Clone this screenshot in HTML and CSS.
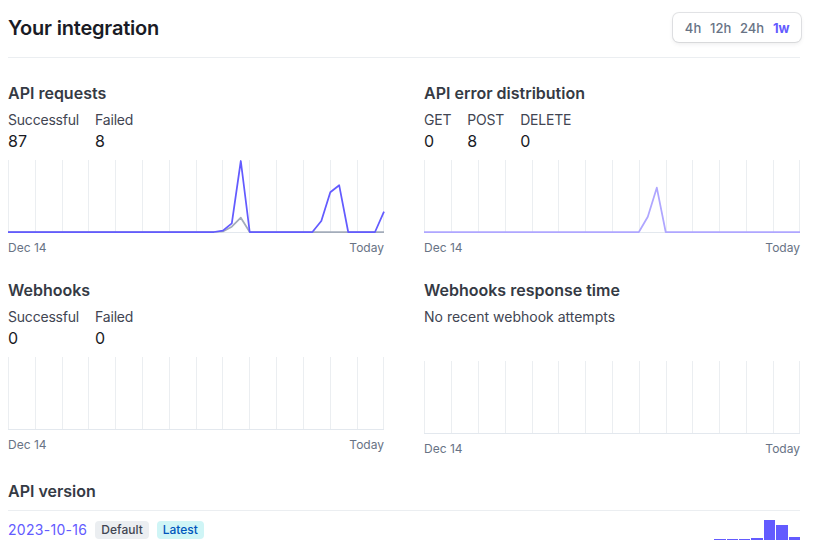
FILE: index.html
```html
<!DOCTYPE html>
<html>
<head>
<meta charset="utf-8">
<link rel="stylesheet" href="styles.css">
</head>
<body>
<div class="page">
  <header class="header">
    <h1 class="title">Your integration</h1>
    <div class="range">
      <span class="range-item">4h</span>
      <span class="range-item">12h</span>
      <span class="range-item">24h</span>
      <span class="range-item active">1w</span>
    </div>
  </header>
  <div class="divider"></div>

  <div class="grid">
    <section class="card">
      <h2 class="card-title">API requests</h2>
      <div class="stats">
        <div class="stat"><div class="stat-label">Successful</div><div class="stat-value">87</div></div>
        <div class="stat"><div class="stat-label">Failed</div><div class="stat-value">8</div></div>
      </div>
      <svg class="chart" width="376" height="73" viewBox="0 0 376 73">
        <g class="grid-lines">
          <line x1="0.5" y1="0" x2="0.5" y2="73"/><line x1="27.5" y1="0" x2="27.5" y2="73"/><line x1="54.5" y1="0" x2="54.5" y2="73"/><line x1="80.5" y1="0" x2="80.5" y2="73"/><line x1="107.5" y1="0" x2="107.5" y2="73"/><line x1="134.5" y1="0" x2="134.5" y2="73"/><line x1="161.5" y1="0" x2="161.5" y2="73"/><line x1="188.5" y1="0" x2="188.5" y2="73"/><line x1="214.5" y1="0" x2="214.5" y2="73"/><line x1="241.5" y1="0" x2="241.5" y2="73"/><line x1="268.5" y1="0" x2="268.5" y2="73"/><line x1="295.5" y1="0" x2="295.5" y2="73"/><line x1="322.5" y1="0" x2="322.5" y2="73"/><line x1="349.5" y1="0" x2="349.5" y2="73"/><line x1="375.5" y1="0" x2="375.5" y2="73"/>
          <line class="base" x1="0" y1="72.5" x2="376" y2="72.5"/>
        </g>
        <polyline class="line-gray" points="0,72 205.9,72 214.9,71.5 223.8,66.7 232.8,57.7 241.7,72 376,72"/>
        <polyline class="line-blue" points="0,72 205.9,72 214.9,70.7 223.8,63.3 232.8,1 241.7,72 304.4,72 313.3,61 322.3,32.3 331.2,25.3 340.2,72 367,72 376,51.7"/>
      </svg>
      <div class="axis"><span>Dec 14</span><span>Today</span></div>
    </section>

    <section class="card">
      <h2 class="card-title">API error distribution</h2>
      <div class="stats">
        <div class="stat"><div class="stat-label">GET</div><div class="stat-value">0</div></div>
        <div class="stat"><div class="stat-label">POST</div><div class="stat-value">8</div></div>
        <div class="stat"><div class="stat-label">DELETE</div><div class="stat-value">0</div></div>
      </div>
      <svg class="chart" width="376" height="73" viewBox="0 0 376 73">
        <g class="grid-lines">
          <line x1="0.5" y1="0" x2="0.5" y2="73"/><line x1="27.5" y1="0" x2="27.5" y2="73"/><line x1="54.5" y1="0" x2="54.5" y2="73"/><line x1="81.5" y1="0" x2="81.5" y2="73"/><line x1="108.5" y1="0" x2="108.5" y2="73"/><line x1="134.5" y1="0" x2="134.5" y2="73"/><line x1="161.5" y1="0" x2="161.5" y2="73"/><line x1="188.5" y1="0" x2="188.5" y2="73"/><line x1="215.5" y1="0" x2="215.5" y2="73"/><line x1="242.5" y1="0" x2="242.5" y2="73"/><line x1="268.5" y1="0" x2="268.5" y2="73"/><line x1="295.5" y1="0" x2="295.5" y2="73"/><line x1="322.5" y1="0" x2="322.5" y2="73"/><line x1="349.5" y1="0" x2="349.5" y2="73"/><line x1="375.5" y1="0" x2="375.5" y2="73"/>
          <line class="base" x1="0" y1="72.5" x2="376" y2="72.5"/>
        </g>
        <polyline class="line-light" points="0,72 214.9,72 223.8,56.7 232.8,27.7 241.7,72 376,72"/>
      </svg>
      <div class="axis"><span>Dec 14</span><span>Today</span></div>
    </section>

    <section class="card">
      <h2 class="card-title">Webhooks</h2>
      <div class="stats">
        <div class="stat"><div class="stat-label">Successful</div><div class="stat-value">0</div></div>
        <div class="stat"><div class="stat-label">Failed</div><div class="stat-value">0</div></div>
      </div>
      <svg class="chart" width="376" height="73" viewBox="0 0 376 73">
        <g class="grid-lines">
          <line x1="0.5" y1="0" x2="0.5" y2="73"/><line x1="27.5" y1="0" x2="27.5" y2="73"/><line x1="54.5" y1="0" x2="54.5" y2="73"/><line x1="80.5" y1="0" x2="80.5" y2="73"/><line x1="107.5" y1="0" x2="107.5" y2="73"/><line x1="134.5" y1="0" x2="134.5" y2="73"/><line x1="161.5" y1="0" x2="161.5" y2="73"/><line x1="188.5" y1="0" x2="188.5" y2="73"/><line x1="214.5" y1="0" x2="214.5" y2="73"/><line x1="241.5" y1="0" x2="241.5" y2="73"/><line x1="268.5" y1="0" x2="268.5" y2="73"/><line x1="295.5" y1="0" x2="295.5" y2="73"/><line x1="322.5" y1="0" x2="322.5" y2="73"/><line x1="349.5" y1="0" x2="349.5" y2="73"/><line x1="375.5" y1="0" x2="375.5" y2="73"/>
          <line class="base" x1="0" y1="72.5" x2="376" y2="72.5"/>
        </g>
      </svg>
      <div class="axis"><span>Dec 14</span><span>Today</span></div>
    </section>

    <section class="card">
      <h2 class="card-title">Webhooks response time</h2>
      <p class="note">No recent webhook attempts</p>
      <svg class="chart" width="376" height="73" viewBox="0 0 376 73">
        <g class="grid-lines">
          <line x1="0.5" y1="0" x2="0.5" y2="73"/><line x1="27.5" y1="0" x2="27.5" y2="73"/><line x1="54.5" y1="0" x2="54.5" y2="73"/><line x1="81.5" y1="0" x2="81.5" y2="73"/><line x1="108.5" y1="0" x2="108.5" y2="73"/><line x1="134.5" y1="0" x2="134.5" y2="73"/><line x1="161.5" y1="0" x2="161.5" y2="73"/><line x1="188.5" y1="0" x2="188.5" y2="73"/><line x1="215.5" y1="0" x2="215.5" y2="73"/><line x1="242.5" y1="0" x2="242.5" y2="73"/><line x1="268.5" y1="0" x2="268.5" y2="73"/><line x1="295.5" y1="0" x2="295.5" y2="73"/><line x1="322.5" y1="0" x2="322.5" y2="73"/><line x1="349.5" y1="0" x2="349.5" y2="73"/><line x1="375.5" y1="0" x2="375.5" y2="73"/>
          <line class="base" x1="0" y1="72.5" x2="376" y2="72.5"/>
        </g>
      </svg>
      <div class="axis"><span>Dec 14</span><span>Today</span></div>
    </section>
  </div>

  <section class="version">
    <h2 class="card-title version-title">API version</h2>
    <div class="divider"></div>
    <div class="version-row">
      <div class="version-info">
        <span class="version-date">2023-10-16</span>
        <span class="badge badge-default">Default</span>
        <span class="badge badge-latest">Latest</span>
      </div>
      <div class="bars">
        <span class="bar" style="height:1px"></span>
        <span class="bar" style="height:1px"></span>
        <span class="bar" style="height:1px"></span>
        <span class="bar" style="height:2px"></span>
        <span class="bar" style="height:20px"></span>
        <span class="bar" style="height:15px"></span>
        <span class="bar" style="height:3px"></span>
      </div>
    </div>
  </section>
</div>
</body>
</html>
```

FILE: styles.css
```css
* { box-sizing: border-box; }

html, body {
  margin: 0;
  padding: 0;
  background: #ffffff;
}

body {
  font-family: Inter, "Noto Sans", "Liberation Sans", sans-serif;
  color: #353A44;
  -webkit-font-smoothing: antialiased;
}

.page {
  width: 792px;
  margin-left: 8px;
  padding-top: 13px;
}

.header {
  display: flex;
  justify-content: space-between;
  align-items: center;
  height: 29px;
}

.title {
  margin: 0;
  font-size: 20px;
  line-height: 28px;
  font-weight: 600;
  color: #1A1B25;
  letter-spacing: -0.2px;
}

.range {
  display: flex;
  align-items: center;
  height: 29px;
  padding: 0 7px;
  margin-right: -1px;
  border-radius: 6px;
  background: #fff;
  box-shadow: 0 0 0 1px rgba(64, 68, 82, 0.14), 0 2px 4px rgba(64, 68, 82, 0.1);
}

.range-item {
  padding: 0 4.4px;
  font-size: 13px;
  line-height: 18px;
  font-weight: 500;
  color: #687385;
}

.range-item.active {
  color: #635BFF;
  font-weight: 700;
}

.divider {
  height: 1px;
  background: #EBEEF1;
}

.header + .divider {
  margin-top: 15px;
  margin-bottom: 23px;
}

.grid {
  display: grid;
  grid-template-columns: 376px 376px;
  column-gap: 40px;
  row-gap: 22px;
}

.card {
  display: flex;
  flex-direction: column;
}

.card-title {
  margin: 0 0 5px;
  font-size: 16px;
  line-height: 24px;
  font-weight: 600;
  color: #353A44;
}

.stats {
  display: flex;
  gap: 16px;
}

.stat-label {
  font-size: 14px;
  line-height: 20px;
  color: #414552;
  letter-spacing: -0.2px;
}

.stat-value {
  font-size: 16px;
  line-height: 22px;
  color: #1A1B25;
}

.note {
  margin: 0;
  padding-bottom: 26px;
  font-size: 14px;
  line-height: 20px;
  color: #414552;
}

.chart {
  display: block;
  margin-top: 8px;
  overflow: visible;
}

.grid-lines line {
  stroke: #EBEEF1;
  stroke-width: 1;
}

.grid-lines line.base {
  stroke: #E3E8EE;
}

.line-blue, .line-gray, .line-light {
  fill: none;
  stroke-width: 1.75;
  stroke-linejoin: round;
}

.line-blue { stroke: #635BFF; }
.line-gray { stroke: #A3ACBA; }
.line-light { stroke: #AFA6FF; }

.axis {
  display: flex;
  justify-content: space-between;
  margin-top: 7px;
  font-size: 12px;
  line-height: 16px;
  color: #687385;
}

.version {
  margin-top: 22px;
}

.version-title {
  margin-bottom: 7px;
}

.version-row {
  display: flex;
  justify-content: space-between;
  align-items: center;
  padding-top: 9px;
}

.version-info {
  display: flex;
  align-items: center;
  gap: 8px;
}

.version-date {
  font-size: 14px;
  line-height: 18px;
  color: #635BFF;
  letter-spacing: 0.3px;
}

.badge {
  display: inline-block;
  height: 18px;
  padding: 0 6px;
  border-radius: 4px;
  font-size: 12px;
  line-height: 18px;
  font-weight: 500;
}

.badge-default {
  background: #EBEEF1;
  color: #414552;
}

.badge-latest {
  background: #CFF5F6;
  color: #0055BC;
}

.bars {
  display: flex;
  align-items: flex-end;
  gap: 1px;
  height: 20px;
}

.bar {
  display: block;
  width: 11.4px;
  background: #635BFF;
}
```
